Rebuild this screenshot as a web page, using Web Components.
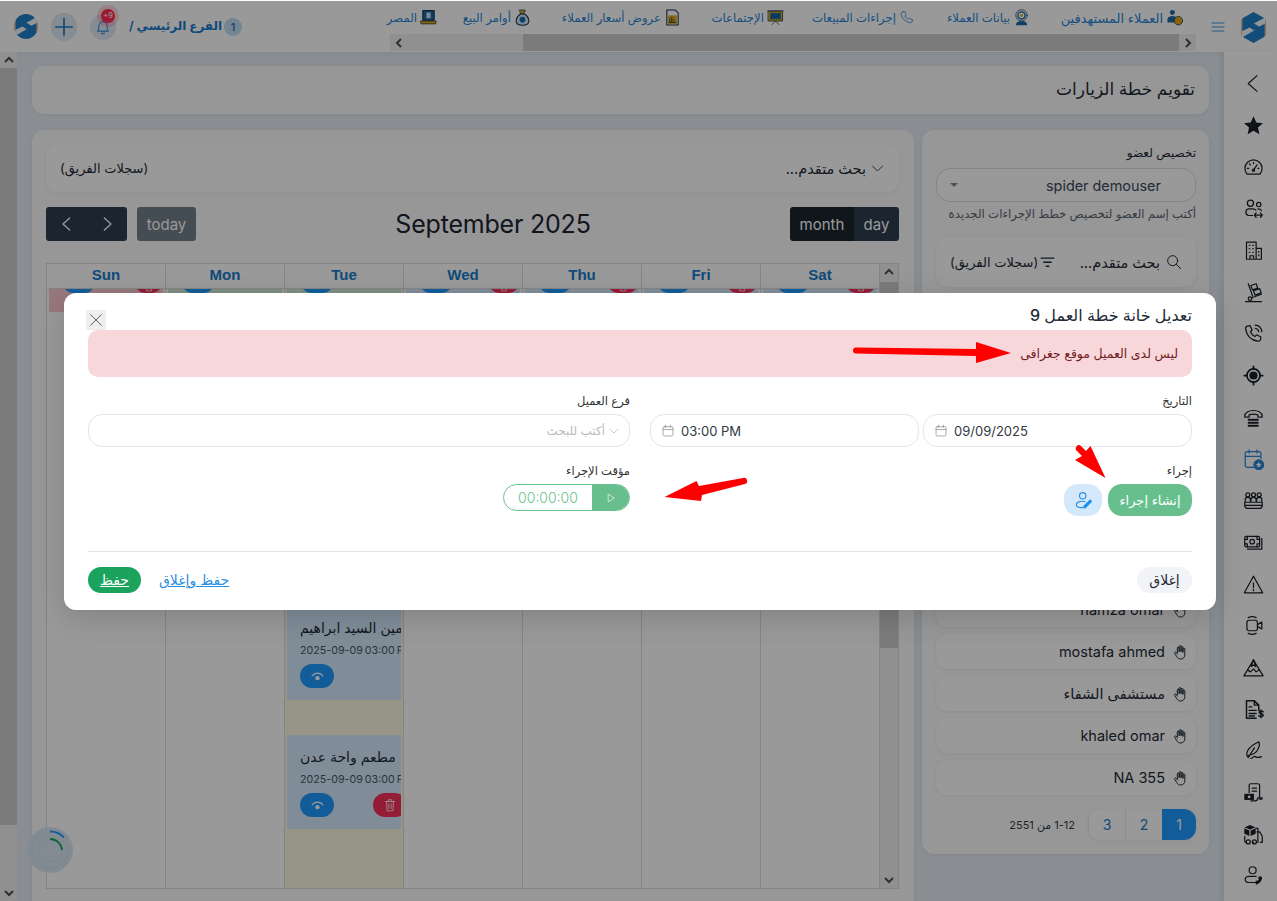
<!doctype html>
<html lang="ar" dir="rtl">
<head>
<meta charset="utf-8">
<title>تقويم خطة الزيارات</title>
<style>
  html, body { margin: 0; padding: 0; background: #fff; }
  body { font-family: Inter, "Noto Sans", "DejaVu Sans", sans-serif; color: #1e2a36; overflow: hidden; }
</style>
</head>
<body>
<x-app>
  <x-topbar slot="top"></x-topbar>
  <x-sidebar slot="side"></x-sidebar>
  <x-scrollbar slot="pagebar" before="0" thumb="757"></x-scrollbar>
  <x-title-card>تقويم خطة الزيارات</x-title-card>
  <x-member-panel slot="right"></x-member-panel>
  <x-calendar-card slot="left"></x-calendar-card>
  <x-spinner slot="over"></x-spinner>
  <x-backdrop slot="over"></x-backdrop>
  <x-modal slot="over"></x-modal>
  <x-arrows slot="over"></x-arrows>
</x-app>

<script>
const FONT = 'Inter, "Noto Sans", "DejaVu Sans", sans-serif';

function tpl(html) {
  const t = document.createElement("template");
  t.innerHTML = html;
  return t;
}

/** Base class: clones the static template of the subclass into an open shadow root. */
class ShadowElement extends HTMLElement {
  constructor() {
    super();
    const shadow = this.attachShadow({ mode: "open" });
    shadow.appendChild(document.importNode(this.constructor.template.content, true));
  }
}

/* Stroke icons on a 24 box; the fill ones set their own fill. */
const ICONS = {
  back: '<path d="M16 3 6 12l10 9"/>',
  star: '<path fill="currentColor" stroke="none" d="M12 1.5l3.2 7 7.6.8-5.7 5.1 1.6 7.5L12 18.1l-6.7 3.8 1.6-7.5L1.2 9.3l7.6-.8z"/>',
  gauge: '<path d="M4.5 19.5h15a9.8 9.8 0 1 0-15 0zM12 15l4-6M5 13h1.5M18 13h-1M12 6v1.5M7.5 8l1 1"/><circle cx="12" cy="15" r="1.3"/>',
  people: '<circle cx="8.5" cy="6" r="3.5"/><circle cx="18" cy="7.5" r="2.5"/><path d="M11 20H6.5a3.8 3.8 0 0 1 0-7.5h5c1.5 0 2.5.5 3.2 1.5M17 12.5c2 0 3.5.6 4 1.8M13 19.5h9M15 17l-2 2.5 2 2.5M20 17l2 2.5-2 2.5"/>',
  building: '<path d="M4 22V2.5h11V22zM15 9.5h6V22H4M8 22v-4h4v4M7 6h1M11 6h1M7 10h1M11 10h1M7 14h1M11 14h1M18 13v1M18 17v1"/>',
  trolley: '<path d="M3 22.5h18M6 2l5 14"/><circle cx="8" cy="19" r="2"/><path d="M10 18l11-4M9 4l6-2 1.8 5-6 2zM12 10l7-2.5 1.8 5-7 2.5z"/>',
  phonewave: '<path d="M5 3.5 8 3l2.5 5-2 2c1 2.5 2.8 4.3 5 5.5l2-2 5 2.5-.5 3c-.3 1.5-1.5 2-3 1.8C9.5 19.8 4 14.5 3 6.5c-.1-1.5.5-2.7 2-3z"/><path d="M14 2.5c4 .3 7 3.3 7.5 7.5M14 6c2 .3 3.5 1.7 4 4"/>',
  target: '<circle cx="12" cy="12" r="7.5" stroke-width="2"/><circle cx="12" cy="12" r="4" fill="currentColor"/><path d="M12 1.5v3M12 19.5v3M1.5 12h3M19.5 12h3" stroke-width="2"/>',
  dial: '<path d="M2 10.5c0-4 4.5-6.5 10-6.5s10 2.5 10 6.5v1h-5V9c-3-1-7-1-10 0v2.5H2z"/><path stroke-width="2.4" stroke-dasharray="2.4 1.6" d="M6.5 14.5h11M6.5 18h11M6.5 21.5h11"/>',
  calstar: '<path d="M12 21H5a2.5 2.5 0 0 1-2.5-2.5v-13A2.5 2.5 0 0 1 5 3h13a2.5 2.5 0 0 1 2.5 2.5V11M2.5 8.5h18M7 1v3.5M16 1v3.5"/><circle cx="18" cy="18" r="5.5" fill="currentColor"/><path fill="#fff" stroke="none" d="M18 14.5l1 2.3 2.3.2-1.7 1.6.5 2.3-2.1-1.2-2.1 1.2.5-2.3-1.7-1.6 2.3-.2z"/>',
  team: '<circle cx="5.5" cy="5.5" r="2.3"/><circle cx="12" cy="5.5" r="2.3"/><circle cx="18.5" cy="5.5" r="2.3"/><path d="M2.5 14v-3c0-1.5 1-2.5 3-2.5s3 1 3 2.5v3M9 14v-3c0-1.5 1-2.5 3-2.5s3 1 3 2.5v3M15.5 14v-3c0-1.5 1-2.5 3-2.5s3 1 3 2.5v3M2 14h20v3.5c0 2-1 3.5-3 3.5H5c-2 0-3-1.5-3-3.5zM2 17.5h20"/>',
  cash: '<rect x="2" y="5" width="17" height="12" rx="1.5"/><circle cx="10.5" cy="11" r="2.6"/><path d="M21.5 7.5V19.5H5M2 8.5h3V5M16 5v3.5h3M2 13.5h3V17M16 17v-3.5h3"/>',
  warn: '<path d="M12 2.5 1.5 21.5h21zM12 10v5.5M12 17.5v1.5"/>',
  video: '<rect x="4.5" y="6" width="12" height="12" rx="2.5"/><path d="M16.5 11l5-3v8l-5-3M6 3c3-1.5 6-1.5 9 0M6 21c3 1.5 6 1.5 9 0"/>',
  peak: '<path d="M1 21.5 9 8.5l3-5.5 3 5.5 8 13zM5.5 15l3 2 3.5-3.5 3 3.5 3.5-2.5M12 3 9.5 11l2.5-2 2.5 2z"/>',
  invoice: '<path d="M4 22V2h9l5 5v6M13 2v5h5M4 22h11M7 9h3M7 13h8M7 16.5h8M7 19.5h6" stroke-width="1.7"/><path d="M23 14.5c-1-1-4-1.2-4.5.5s4.5 1.5 4.5 3.5-3.5 2-5 .7M20.5 12.5v9" stroke-width="1.7"/>',
  sign: '<path d="M6 20C2 16 5 8 18 2c2 4-1 14-10 15-1 0-2 1-2 3zM6 20l7-11M9 21c3 0 3-3 5-2s3 2 7 0"/>',
  receipt: '<path d="M7 12V3.5C7 2.5 8 2 9 2h8c1 0 2 1 2 2v15M19 19c1 1.5 3 1 3-1h-5c0 2.5-1 3.5-3 3.5H9M10.5 7h5M10.5 10.5h5"/><rect x="1.5" y="13.5" width="11" height="7" fill="currentColor" stroke="none"/><circle cx="7" cy="17" r="1.6" fill="#fff" stroke="none"/>',
  truckbox: '<path fill="currentColor" stroke="none" d="M8 1l6.5 3v7L8 14l-6.5-3V4z"/><path stroke="#fff" d="M2 4.5l6 2.7 6-2.7M8 7.5V14"/><path d="M15 5h2v16M2 14v5c0 1 1 2 1.5 2M11.5 21H12M16 9h3l3 5v7h-2"/><circle cx="6" cy="20.5" r="2.3"/><circle cx="13" cy="20.5" r="2.3"/>',
  userphone: '<circle cx="11" cy="6" r="4"/><path d="M15 13H7c-6 0-6 7 0 7h6"/><path fill="currentColor" d="M19 13.5l2 .5c.5 3-2 6.5-5.5 7.5l-1.2-1.8 2-1.5 1 .5c1-.7 1.5-1.7 1.5-2.8l-.8-.7z"/>',
  menu: '<path d="M3 6h18M3 12h18M3 18h18"/>',
  plus: '<path d="M12 2v20M2 12h20"/>',
  bell: '<path d="M5 17.5c1.5-2 1.5-3.5 1.5-6.5 0-3.5 2.5-6 5.5-6s5.5 2.5 5.5 6c0 3 0 4.5 1.5 6.5zM12 2.5V5M10 20c.5 1.5 3.5 1.5 4 0"/>',
  search: '<circle cx="10" cy="10" r="7.5"/><path d="M15.5 15.5l6.5 6.5"/>',
  filter: '<path d="M2 5h20M6 11.5h12M10 18h4" stroke-width="2.2"/>',
  hand: '<path d="M8 13V6a1.4 1.4 0 0 1 2.8 0v5M10.8 11V3.8a1.4 1.4 0 0 1 2.8 0V11M13.6 11V5a1.4 1.4 0 0 1 2.8 0v7M16.4 12V7.5a1.4 1.4 0 0 1 2.8 0V16c0 4-2.5 6.5-6 6.5-3 0-4.5-1-6-3.5L4 14c-.8-1.5 1.2-2.8 2.3-1.5L8 15"/>',
  phone: '<path d="M6 3l3-.5 2.5 5-2 2c1 2.5 2.8 4.3 5 5.5l2-2 5 2.5-.5 3c-.3 1.5-1.5 2-3 1.8C10 19 4.5 13.5 3.5 6.5c-.1-1.5 1-3.2 2.5-3.5z"/>',
  cal: '<rect x="3.5" y="4.5" width="17" height="16" rx="2"/><path d="M3.5 9.5h17M8 2v4M16 2v4"/>',
  chev: '<path d="M4 8l8 8 8-8"/>',
  close: '<path d="M4 4l16 16M20 4 4 20"/>',
  play: '<path d="M6 3l14 9-14 9z"/>',
  eye: '<path d="M2 11c5-7 15-7 20 0" stroke-width="2"/><circle cx="12" cy="15" r="4" fill="currentColor" stroke="none"/>',
  trash: '<path d="M4 6h16M9 6V3h6v3M6 6l1 16h10l1-16M10 10v8M14 10v8"/>',
  useredit: '<circle cx="11" cy="6" r="4"/><path d="M14 13.5c-1-.3-2-.5-3-.5-5 0-8 1.5-8 4.5 0 2.5 2 3.5 5 3.5h3"/><path stroke-width="4" stroke="#1a8fef" d="M13.5 20l7-7"/>',
  c_target: '<circle cx="9" cy="5" r="3.5" fill="#1a6aa8" stroke="none"/><path fill="#1a6aa8" stroke="none" d="M2 19v-4c0-3 3-5 7-5s6 1.5 6.5 3V19z"/><circle cx="17.5" cy="16.5" r="6" fill="#e0a814" stroke="#14304a"/>',
  c_radar: '<circle cx="12" cy="9" r="8" stroke="#14304a"/><circle cx="12" cy="9" r="5" stroke="#1a6aa8" stroke-width="2"/><circle cx="12" cy="9" r="2" fill="#e0a814" stroke="none"/><path fill="#1a6aa8" stroke="none" d="M4 23c0-4 3-6 8-6s8 2 8 6z"/>',
  c_board: '<rect x="2" y="3" width="20" height="14" fill="#e0a814" stroke="#14304a"/><rect x="4.5" y="5.5" width="15" height="9" fill="#1a6aa8" stroke="none"/><path stroke="#14304a" d="M1 2.5h22M7 22l5-5 5 5M5 13l4-4 3 3 5-5"/>',
  c_doc: '<path fill="#fff" stroke="#14304a" stroke-width="1.5" d="M4 1.5h12l4 4v17H4z"/><rect x="6" y="9" width="12" height="12" fill="#e0a814" stroke="none"/><path stroke="#14304a" d="M8 18v-4M11 18v-6M14 18v-3M7 19h10"/>',
  c_bag: '<path fill="#cfe3f5" stroke="#14304a" stroke-width="1.5" d="M9 7c-4 3-6 6-6 10 0 4 4 6 9 6s9-2 9-6c0-4-2-7-6-10z"/><path fill="#e0a814" stroke="#14304a" d="M8 1.5h8l-2 5h-4z"/><circle cx="12" cy="15" r="4" fill="#1a6aa8" stroke="none"/>',
  c_laptop: '<rect x="4" y="2" width="16" height="14" fill="#1a6aa8" stroke="#14304a" stroke-width="1.5"/><rect x="9" y="5" width="6" height="8" fill="#cfe3f5" stroke="none"/><path fill="#e0a814" stroke="#14304a" d="M1 17h22l-1 4H2z"/>'
};

/** One inline svg out of ICONS. Attributes: name, size, color, sw. */
class XIcon extends HTMLElement {
  constructor() {
    super();
    this.attachShadow({ mode: "open" });
  }
  connectedCallback() {
    const size = this.getAttribute("size") || 20;
    const sw = this.getAttribute("sw") || 1.5;
    const color = this.getAttribute("color") || "currentColor";
    this.shadowRoot.innerHTML = `<style>:host{display:inline-flex;flex:none;line-height:0}svg{display:block}</style>
      <svg xmlns="http://www.w3.org/2000/svg" width="${size}" height="${size}" viewBox="0 0 24 24" fill="none" stroke="${color}" color="${color}" stroke-width="${sw}" stroke-linecap="round" stroke-linejoin="round">${ICONS[this.getAttribute("name")]}</svg>`;
  }
}

/** The S hexagon of the brand: a blue hexagon with two white slits, tan at its flanks. */
class XLogo extends ShadowElement {
  static template = tpl(`<style>:host{display:inline-flex;line-height:0}</style>
    <svg xmlns="http://www.w3.org/2000/svg" width="100%" height="100%" viewBox="0 0 26 32">
      <path fill="#e3b48c" d="M0 8 2 7v18l-2-1zM26 8l-2-1v18l2-1z"/>
      <path fill="#1f7fc9" d="M13 0 24.5 6.5v19L13 32 1.5 25.5v-19z"/>
      <path fill="#fff" d="M25 5.5 10.5 13.5 16 16.5 25 12zM1 26.5 15.5 18 10 15.5 1 20z" fill-opacity=".95"/>
      <path fill="#1f7fc9" d="M7 14.5 13 11.5 19.5 15.5 13.5 19z"/>
    </svg>`);
}

/** Plain scrollbar with arrows. Attributes: horizontal, before, thumb (px). */
class XScrollbar extends HTMLElement {
  constructor() {
    super();
    this.attachShadow({ mode: "open" });
  }
  connectedCallback() {
    const h = this.hasAttribute("horizontal");
    const a = this.getAttribute("before") || 0;
    const b = this.getAttribute("thumb") || 0;
    const arrow = d => `<span class="arrow"><svg width="10" height="8" viewBox="0 0 10 8" style="transform:rotate(${d}deg)"><path d="M1 6l4-4 4 4" fill="none" stroke="#505050" stroke-width="2"/></svg></span>`;
    const thumbBox = h ? `width:${b}px;margin-left:${a}px;height:100%` : `height:${b}px;margin-top:${a}px;width:100%`;
    this.shadowRoot.innerHTML = `<style>
      :host{display:flex;flex-direction:${h ? "row" : "column"};direction:ltr;background:#f1f1f1;${h ? "height:17px" : "width:17px"}}
      .arrow{flex:none;display:flex;align-items:center;justify-content:center;${h ? "width:17px" : "height:16px"}}
      .track{flex:1;min-width:0;min-height:0;display:flex}
      .thumb{background:#cdcdcd;flex:none}
    </style>${arrow(h ? -90 : 0)}<div class="track"><div class="thumb" style="${thumbBox}"></div></div>${arrow(h ? 90 : 180)}`;
  }
}

/** Page frame: top bar, side rail, page scrollbar and the work area. */
class XApp extends ShadowElement {
  static template = tpl(`<style>
    :host{display:grid;position:relative;width:1277px;height:901px;overflow:hidden;
      grid-template-columns:53px 1fr 17px;grid-template-rows:52px 1fr;background:#e7edf3;direction:rtl}
    .top{grid-column:1 / -1}
    main{min-width:0;min-height:0;overflow:hidden;padding:14px 15px 0;display:flex;flex-direction:column;gap:16px;box-shadow:inset 0 6px 8px -6px rgba(0,0,0,.08)}
    .cols{display:grid;grid-template-columns:287px 1fr;gap:8px;align-items:start;min-height:0}
  </style>
  <div class="top"><slot name="top"></slot></div>
  <slot name="side"></slot>
  <main><slot></slot><div class="cols"><slot name="right"></slot><slot name="left"></slot></div></main>
  <slot name="pagebar"></slot>
  <slot name="over"></slot>`);
}

class XTopbar extends ShadowElement {
  static template = tpl(`<style>
    :host{display:flex;height:52px;background:#fff;box-sizing:border-box;border-top:1px solid #fff;font-family:${FONT}}
    .brand{width:53px;box-sizing:border-box;padding-left:6px;flex:none;display:flex;align-items:center;justify-content:center}
    .brand x-logo{width:25px;height:31px;margin-top:1px}
    .burger{width:28px;flex:none;display:flex;align-items:center;color:#2a8ee0;margin-right:-2px;margin-left:2px}
    nav{width:806px;flex:none;display:flex;flex-direction:column}
    .items{height:33px;display:flex;align-items:center;padding-right:13px;color:#2a86d6;font-size:11.7px;white-space:nowrap}
    .items span{display:flex;align-items:center;gap:3px;flex:none}
    .branch{margin-right:auto;display:flex;align-items:center;padding-left:14px}
    .count{width:18px;height:18px;border-radius:50%;background:#c3dcf2;color:#1a6fb8;font-size:11px;display:flex;align-items:center;justify-content:center;margin-left:2px;font-weight:500}
    .crumb{font-size:12px;font-weight:700;color:#1a7ccb;white-space:nowrap;margin-top:-2px}
    .bell{width:26px;height:26px;border-radius:50%;background:#dfeaf3;display:flex;align-items:center;justify-content:center;position:relative;color:#2a8ee0;margin-right:13px}
    .badge{position:absolute;left:11px;top:-5px;width:14px;height:14px;border-radius:50%;background:#ff2b52;color:#fff;font-size:7.5px;display:flex;align-items:center;justify-content:center;box-shadow:0 0 0 4px rgba(255,43,82,.2);direction:ltr}
    .plus{width:26px;height:28px;border-radius:50%;background:#dfeaf3;display:flex;align-items:center;justify-content:center;color:#1a7ccb;margin-right:13px}
    .mini{width:24px;height:25px;margin-right:13px;border-radius:50%;background:#e3c7ab;display:flex;overflow:hidden}
    .mini x-logo{width:24px;height:25px;transform:scale(1.15)}
  </style>
  <div class="brand"><x-logo></x-logo></div>
  <div class="burger"><x-icon name="menu" size="16" sw="1.4"></x-icon></div>
  <nav>
    <div class="items">
      <span style="width:123px"><x-icon name="c_target" size="17" sw="1"></x-icon><b style="font-weight:400;font-size:13px">العملاء المستهدفين</b></span>
      <span style="width:86px;margin-right:30px"><x-icon name="c_radar" size="17" sw="1"></x-icon>بيانات العملاء</span>
      <span style="width:102px;margin-right:30px"><x-icon name="phone" size="15" sw="1.3" color="#2a86d6"></x-icon>إجراءات المبيعات</span>
      <span style="width:74px;margin-right:28px"><x-icon name="c_board" size="17" sw="1"></x-icon>الإجتماعات</span>
      <span style="width:119px;margin-right:29px"><x-icon name="c_doc" size="17" sw="1"></x-icon>عروض أسعار العملاء</span>
      <span style="width:66px;margin-right:31px"><x-icon name="c_bag" size="17" sw="1"></x-icon>أوامر البيع</span>
      <span style="margin-right:28px"><x-icon name="c_laptop" size="17" sw="1"></x-icon>المصر</span>
    </div>
    <x-scrollbar horizontal before="116" thumb="656"></x-scrollbar>
  </nav>
  <div class="branch">
    <span class="count">1</span><span class="crumb">الفرع الرئيسي /</span>
    <span class="bell"><x-icon name="bell" size="18" sw="1.4"></x-icon><span class="badge">+9</span></span>
    <span class="plus"><x-icon name="plus" size="20" sw="2"></x-icon></span>
    <span class="mini"><x-logo></x-logo></span>
  </div>`);
}

class XSidebar extends ShadowElement {
  static template = tpl(`<style>
    :host{display:flex;flex-direction:column;align-items:center;box-sizing:border-box;padding:11px 0 0 6px;background:#fff;color:#1a1f25;box-shadow:-3px 0 5px rgba(30,50,70,.08)}
    x-icon{height:41.7px;display:flex;align-items:center}
  </style>`);
  constructor() {
    super();
    const items = ["back", "star", "gauge", "people", "building", "trolley", "phonewave", "target", "dial", "calstar", "team", "cash", "warn", "video", "peak", "invoice", "sign", "receipt", "truckbox", "userphone"];
    for (const name of items) {
      const i = document.createElement("x-icon");
      i.setAttribute("name", name);
      i.setAttribute("size", 21);
      i.setAttribute("sw", "1.4");
      if (name === "calstar") i.setAttribute("color", "#2a86d6");
      this.shadowRoot.appendChild(i);
    }
  }
}

class XTitleCard extends ShadowElement {
  static template = tpl(`<style>
    :host{display:flex;align-items:center;height:48px;flex:none;box-sizing:border-box;padding:0 14px 2px;background:#fcfcfd;border-radius:12px;box-shadow:0 1px 4px rgba(40,60,80,.08);font:500 17px ${FONT};color:#1e2a36}
  </style><slot></slot>`);
}

class XMemberPanel extends ShadowElement {
  static template = tpl(`<style>
    :host{display:block;height:724px;box-sizing:border-box;padding:14px 13px 14px 14px;background:#fcfcfd;border-radius:12px;box-shadow:0 1px 4px rgba(40,60,80,.08);font-family:${FONT};color:#1e2a36}
    label{display:block;font-size:12px;line-height:17px;height:24px}
    .select{width:260px;height:34px;border:1px solid #ddd;border-radius:14px;background:#fff;box-sizing:border-box;display:flex;align-items:center;padding-left:13px;direction:ltr;color:#3a4a5e;font-size:14.4px}
    .select i{width:0;height:0;border:4px solid transparent;border-top:4px solid #888;border-bottom:0}
    .select span{margin-left:88px}
    .hint{font-size:11.75px;color:#5a6470;line-height:16px;margin-top:4px;white-space:nowrap}
    .search{margin-top:15px;height:50px;border-radius:12px;background:#fff;box-shadow:0 1px 4px rgba(40,60,80,.08);display:flex;align-items:center;padding:0 14px;font-size:13px;color:#1e2a36}
    .search .q{display:flex;align-items:center;gap:6px;font-size:14.5px}
    .search .f{margin-right:auto;display:flex;align-items:center;gap:2px}
    .list{margin-top:305px;display:flex;flex-direction:column;gap:7px}
    .row{height:35px;border-radius:12px;background:#fff;box-shadow:0 1px 4px rgba(40,60,80,.08);display:flex;align-items:center;padding:0 8px;gap:7px;font-size:14.5px;color:#1e2a36}
    .pages{margin-top:14px;display:flex;align-items:center}
    .pager{display:flex;height:31px;background:#fff;border-radius:12px;box-shadow:0 1px 4px rgba(40,60,80,.08);overflow:hidden;color:#1a7ccb;font-size:14px}
    .pager b{width:36px;display:flex;align-items:center;justify-content:center;font-weight:400;border-left:1px solid #e9e9e9}
    .pager b.on{background:#1f9bff;color:#fff;width:34px;border:0}
    .of{font-size:11px;color:#333d48;margin-right:13px;white-space:nowrap}
  </style>
  <label>تخصيص لعضو</label>
  <div class="select"><i></i><span>spider demouser</span></div>
  <div class="hint">أكتب إسم العضو لتخصيص خطط الإجراءات الجديدة</div>
  <div class="search">
    <span class="q"><x-icon name="search" size="16" sw="1.5"></x-icon>بحث متقدم...</span>
    <span class="f"><x-icon name="filter" size="15"></x-icon>(سجلات الفريق)</span>
  </div>
  <div class="list">
    <div class="row"><x-icon name="hand" size="16" sw="1.5"></x-icon><span>hamza omar</span></div>
    <div class="row"><x-icon name="hand" size="16" sw="1.5"></x-icon><span>mostafa ahmed</span></div>
    <div class="row"><x-icon name="hand" size="16" sw="1.5"></x-icon><span>مستشفى الشفاء</span></div>
    <div class="row"><x-icon name="hand" size="16" sw="1.5"></x-icon><span>khaled omar</span></div>
    <div class="row"><x-icon name="hand" size="16" sw="1.5"></x-icon><span>NA 355</span></div>
  </div>
  <div class="pages">
    <div class="pager"><b class="on">1</b><b>2</b><b>3</b></div>
    <span class="of">1-12 من 2551</span>
  </div>`);
}

class XCalendarCard extends ShadowElement {
  static template = tpl(`<style>
    :host{display:block;height:800px;box-sizing:border-box;padding:14px 15px 14px 14px;background:#fcfcfd;border-radius:12px;box-shadow:0 1px 4px rgba(40,60,80,.08);font-family:${FONT}}
    .adv{height:48px;border-radius:12px;background:#fff;box-shadow:0 1px 4px rgba(40,60,80,.08);display:flex;align-items:center;padding:0 14px;font-size:13px;color:#1e2a36;box-sizing:border-box}
    .adv .q{display:flex;align-items:center;gap:4px;font-size:14.5px}
    .adv .t{margin-right:auto}
    .bar{direction:ltr;display:flex;align-items:center;justify-content:space-between;height:34px;margin-top:15px}
    .grp{display:flex;height:34px;border-radius:3px;overflow:hidden;color:#fff;font-size:15px}
    .grp b{font-weight:400;display:flex;align-items:center;justify-content:center;background:#2c3e50}
    .left{display:flex;gap:10px}
    .today{background:#2c3e50;opacity:.65;width:59px;border-radius:3px;color:#fff;font-size:15px;display:flex;align-items:center;justify-content:center}
    h2{margin:0;font-weight:400;font-size:25px;color:#1b2530;letter-spacing:-.2px}
  </style>
  <div class="adv"><span class="q"><x-icon name="chev" size="15" sw="1.4"></x-icon>بحث متقدم...</span><span class="t">(سجلات الفريق)</span></div>
  <div class="bar">
    <div class="left">
      <div class="grp"><b style="width:41px"><x-icon name="back" size="16" sw="2" color="#fff"></x-icon></b><b style="width:40px;transform:scaleX(-1)"><x-icon name="back" size="16" sw="2" color="#fff"></x-icon></b></div>
      <div class="today">today</div>
    </div>
    <h2>September 2025</h2>
    <div class="grp"><b style="width:64px;background:#1a252f">month</b><b style="width:45px">day</b></div>
  </div>
  <x-calendar></x-calendar>`);
}

/** Month grid, one column per day, with the visit events stacked in flow. */
class XCalendar extends ShadowElement {
  static template = tpl(`<style>
    :host{display:flex;direction:ltr;margin-top:22px;border:1px solid #ddd;height:624px;background:#fff;overflow:hidden}
    .grid{width:833px;flex:none;display:grid;grid-template-columns:repeat(7,119px);grid-template-rows:25px 1fr}
    .h{border-right:1px solid #ddd;border-bottom:1px solid #ddd;text-align:center;font:700 15px/21px "Liberation Sans",sans-serif;color:#1a7ccb;box-sizing:border-box}
    .d{border-right:1px solid #ddd;box-sizing:border-box;min-height:0;overflow:hidden;padding:0 2px}
    .d.now{background:#fcf8e3}
    .strip{height:23px;display:flex;justify-content:space-between;padding-left:13px;overflow:hidden}
    .strip i{display:flex;align-items:flex-end;justify-content:center;height:24px;margin-top:-20px;border-radius:12px;box-sizing:border-box;padding-bottom:1px;color:#fff}
    .strip .b{width:34px;background:#1f9bff}
    .strip .r{width:32px;background:#f72f5c}
    .pink{background:#fcc9d0}.green{background:#d3ecd9}.blue{background:#d6ebff}
    .ev{background:#d6ebff;height:94px;box-sizing:border-box;padding:12px 0 0 13px;overflow:hidden;direction:ltr}
    .ev .n{white-space:nowrap;font-size:14px;line-height:20px;color:#1e2a36;height:20px}
    .ev .w{white-space:nowrap;font-size:10.7px;word-spacing:-1px;line-height:16px;color:#4a5662;margin-top:5px}
    .acts{display:flex;justify-content:space-between;width:107px;margin-top:5px}
    .acts i{display:flex;align-items:center;justify-content:center;width:34px;height:24px;border-radius:12px;color:#fff}
    .acts .b{background:#1f9bff}.acts .r{background:#f72f5c}
  </style>
  <div class="grid">
    <div class="h">Sun</div><div class="h">Mon</div><div class="h">Tue</div><div class="h">Wed</div><div class="h">Thu</div><div class="h">Fri</div><div class="h">Sat</div>
    <div class="d"><div class="strip pink"><i class="b"></i><i class="r" style="width:29px"><x-icon name="trash" size="12" sw="1.4" color="#fff"></x-icon></i></div></div>
    <div class="d"><div class="strip green"><i class="b"></i></div></div>
    <div class="d now">
      <div class="strip green"><i class="b"></i></div>
      <div class="ev" style="margin-top:294px"><div class="n">أمين السيد ابراهيم</div><div class="w">2025-09-09 03:00 PM</div>
        <div class="acts"><i class="b"><x-icon name="eye" size="13" color="#fff"></x-icon></i></div></div>
      <div class="ev" style="margin-top:35px"><div class="n">مطعم واحة عدن</div><div class="w">2025-09-09 03:00 PM</div>
        <div class="acts"><i class="b"><x-icon name="eye" size="13" color="#fff"></x-icon></i><i class="r"><x-icon name="trash" size="14" sw="1.4" color="#fff"></x-icon></i></div></div>
    </div>
    <div class="d"><div class="strip blue"><i class="b"></i><i class="r"><x-icon name="trash" size="12" sw="1.4" color="#fff"></x-icon></i></div></div>
    <div class="d"><div class="strip blue"><i class="b"></i><i class="r"><x-icon name="trash" size="12" sw="1.4" color="#fff"></x-icon></i></div></div>
    <div class="d"><div class="strip blue"><i class="b"></i><i class="r"><x-icon name="trash" size="12" sw="1.4" color="#fff"></x-icon></i></div></div>
    <div class="d"><div class="strip blue"><i class="b"></i><i class="r"><x-icon name="trash" size="12" sw="1.4" color="#fff"></x-icon></i></div></div>
  </div>
  <x-scrollbar style="width:18px" before="2" thumb="366"></x-scrollbar>`);
}

class XSpinner extends ShadowElement {
  static template = tpl(`<style>:host{position:absolute;left:27px;top:827px;width:46px;height:46px;line-height:0}</style>
    <svg xmlns="http://www.w3.org/2000/svg" width="46" height="46" viewBox="0 0 46 46" fill="none">
      <circle cx="23" cy="23" r="23" fill="#dbe8f4"/>
      <circle cx="23" cy="23" r="18" stroke="#d3e0ec"/><circle cx="23" cy="23" r="12" stroke="#d3e0ec"/>
      <path d="M23 4.5a18.5 18.5 0 0 1 14 6" stroke="#1f9bff" stroke-width="1.8"/>
      <path d="M23 12a12 12 0 0 1 12 11" stroke="#1ba35d" stroke-width="1.8"/>
    </svg>`);
}

/* Dim layer of the open dialog. */
class XBackdrop extends ShadowElement {
  static template = tpl(`<style>:host{position:absolute;inset:1px 0 0 0;background:rgba(0,0,0,.4)}</style>`);
}

/** Labelled form cell. */
class XField extends ShadowElement {
  static template = tpl(`<style>
    :host{display:block;min-width:0}
    label{display:block;font-size:11.5px;line-height:15px;height:20px;color:#333}
  </style><label><slot name="label"></slot></label><slot></slot>`);
}

class XModal extends ShadowElement {
  static template = tpl(`<style>
    :host{position:absolute;left:64px;top:293px;width:1152px;height:317px;box-sizing:border-box;padding:0 24px;background:#fff;border-radius:12px;font-family:${FONT};color:#1e2a36;direction:rtl;box-shadow:0 8px 30px rgba(0,0,0,.15)}
    header{height:37px;display:flex;align-items:center;justify-content:space-between;font-size:16px;font-weight:500}
    header .t{margin-top:7px}
    .x{width:20px;height:20px;background:#eee;border-radius:2px;display:flex;align-items:center;justify-content:center;color:#444;margin-left:-2px;margin-top:17px;position:relative;z-index:1}
    .alert{height:47px;border-radius:10px;background:#f8d7da;color:#721c24;font-size:12.5px;display:flex;align-items:center;padding:0 14px}
    .form{display:grid;grid-template-columns:542px 542px;column-gap:20px;row-gap:17px;margin-top:17px;height:157px;align-content:start}
    .two{display:grid;grid-template-columns:1fr 1fr;gap:4px}
    .inp{height:33px;border:1px solid #e3e6ea;border-radius:14px;box-sizing:border-box;display:flex;align-items:center;padding:0 10px;direction:ltr;font-size:13px;color:#333a42;gap:3px;background:#fff}
    .inp span{margin-left:3px}
    .sel{direction:rtl;color:#bbb;font-size:12px;padding:0 9px}
    .sel span{margin:0}
    .acts{display:flex;gap:6px;height:32px}
    .go{width:84px;height:32px;border-radius:14px;background:#68bf8e;color:#fff;font-size:13px;display:flex;align-items:center;justify-content:center}
    .who{width:38px;height:32px;border-radius:14px;background:#d3e9fb;display:flex;align-items:center;justify-content:center;color:#1a8fef}
    .timer{direction:ltr;display:flex;width:127px;height:27px;border:1px solid #68bf8e;border-radius:14px;box-sizing:border-box;overflow:hidden}
    .timer span{flex:1;display:flex;align-items:center;justify-content:center;color:#68bf8e;font-size:14px;font-weight:300}
    .timer i{width:37px;background:#68bf8e;display:flex;align-items:center;justify-content:center;color:#fff}
    footer{border-top:1px solid #e5e5e5;height:56px;display:flex;align-items:center;gap:18px;box-sizing:border-box}
    .close{width:55px;height:26px;border-radius:13px;background:#f1f3f6;color:#1e2a36;font-size:14px;display:flex;align-items:center;justify-content:center;margin-left:auto}
    .link{color:#2a8ee0;font-size:14px;text-decoration:underline}
    .save{width:53px;height:26px;border-radius:13px;background:#1ba35d;color:#fff;font-size:14px;display:flex;align-items:center;justify-content:center;text-decoration:underline}
  </style>
  <header><span class="t">تعديل خانة خطة العمل 9</span><span class="x"><x-icon name="close" size="16" sw="1.2"></x-icon></span></header>
  <div class="alert">ليس لدى العميل موقع جغرافى</div>
  <div class="form">
    <x-field>
      <span slot="label">التاريخ</span>
      <div class="two">
        <div class="inp"><x-icon name="cal" size="14" sw="1.2" color="#888"></x-icon><span>09/09/2025</span></div>
        <div class="inp"><x-icon name="cal" size="14" sw="1.2" color="#888"></x-icon><span>03:00 PM</span></div>
      </div>
    </x-field>
    <x-field>
      <span slot="label">فرع العميل</span>
      <div class="inp sel"><x-icon name="chev" size="12" sw="1.2" color="#aaa"></x-icon><span>أكتب للبحث</span></div>
    </x-field>
    <x-field>
      <span slot="label">إجراء</span>
      <div class="acts"><span class="go">إنشاء إجراء</span><span class="who"><x-icon name="useredit" size="19" sw="1.4" color="#2a8ee0"></x-icon></span></div>
    </x-field>
    <x-field>
      <span slot="label">مؤقت الإجراء</span>
      <div class="timer"><span>00:00:00</span><i><x-icon name="play" size="10" sw="1.5" color="#fff"></x-icon></i></div>
    </x-field>
  </div>
  <footer>
    <span class="close">إغلاق</span>
    <span class="link">حفظ وإغلاق</span>
    <span class="save">حفظ</span>
  </footer>`);
}

/* The three red annotation arrows drawn over the screenshot. */
class XArrows extends ShadowElement {
  static template = tpl(`<style>:host{position:absolute;inset:0;pointer-events:none;line-height:0}</style>
    <svg xmlns="http://www.w3.org/2000/svg" width="1277" height="901" fill="#ff0000" stroke="none">
      <path d="M856 347.5 976 349 976 342 1011 353 976 363 976 356 856 353.5a3 3 0 0 1 0-6z"/>
      <path d="M1105.5 478 1075 460 1082 456 1077 451a3 3 0 0 1 4-5l5 5 4.5-5z"/>
      <path d="M664.5 497 696.5 481 699 486 743 478a3 3 0 0 1 2 6L702 495 701 501z"/>
    </svg>`);
}

customElements.define("x-icon", XIcon);
customElements.define("x-logo", XLogo);
customElements.define("x-scrollbar", XScrollbar);
customElements.define("x-topbar", XTopbar);
customElements.define("x-sidebar", XSidebar);
customElements.define("x-title-card", XTitleCard);
customElements.define("x-member-panel", XMemberPanel);
customElements.define("x-calendar", XCalendar);
customElements.define("x-calendar-card", XCalendarCard);
customElements.define("x-spinner", XSpinner);
customElements.define("x-backdrop", XBackdrop);
customElements.define("x-field", XField);
customElements.define("x-modal", XModal);
customElements.define("x-arrows", XArrows);
customElements.define("x-app", XApp);
</script>
</body>
</html>
